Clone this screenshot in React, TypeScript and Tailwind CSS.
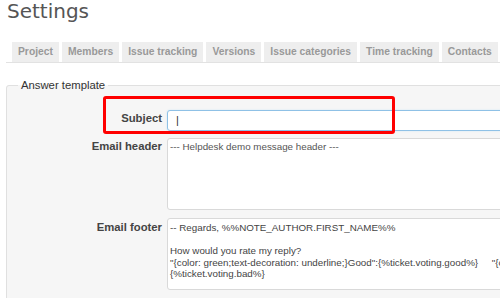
import React from 'react'

const tabs = [
  'Project',
  'Members',
  'Issue tracking',
  'Versions',
  'Issue categories',
  'Time tracking',
  'Contacts',
  'Helpdesk',
]

function Tab({ label }: { label: string }) {
  return (
    <div className="shrink-0 bg-[#eeeeee] px-[6px] text-[10.3px] font-bold leading-[20px] text-[#999999]">
      {label}
    </div>
  )
}

export default function App() {
  return (
    <div className="h-[298px] w-[500px] overflow-hidden bg-white font-['Liberation_Sans',Arial,sans-serif]">
      <h2 className="pl-[7px] font-['DejaVu_Sans',sans-serif] text-[20px] font-normal leading-[22px] text-[#555555]">
        Settings
      </h2>

      <div className="ml-[6px] mt-[20px] flex w-[600px] gap-[3px] border-b border-[#e2e2e2] pl-[6px]">
        {tabs.map((t) => (
          <Tab key={t} label={t} />
        ))}
      </div>

      <div className="relative mt-[15px]">
        <fieldset className="ml-[6px] w-[600px] rounded-[3px] border border-[#e0e0e0] bg-[#f6f6f6] pb-[10px] pt-[18px]">
          <legend className="ml-[11px] px-[3px] text-[11.3px] leading-[14px] text-[#333333]">
            Answer template
          </legend>

          <div className="flex flex-col gap-[7px]">
            <div className="flex items-start gap-[5px]">
              <label className="w-[155px] shrink-0 pt-[1px] text-right text-[11.3px] font-bold leading-[14px] text-[#444444]">
                Subject
              </label>
              <div className="h-[21px] w-[420px] rounded-[3px] border border-[#8fc1e6] bg-white pl-[8px] text-[11px] leading-[19px] text-[#333333] shadow-[0_0_2px_#cfe6f7]">
                |
              </div>
            </div>

            <div className="flex items-start gap-[5px]">
              <label className="w-[155px] shrink-0 pt-[1px] text-right text-[11.3px] font-bold leading-[14px] text-[#444444]">
                Email header
              </label>
              <div className="h-[72px] w-[420px] rounded-[3px] border border-[#d9d9d9] bg-white pl-[2px] pt-[2px] text-[9.8px] leading-[11.5px] text-[#555555]">
                --- Helpdesk demo message header ---
              </div>
            </div>

            <div className="mt-[1px] flex items-start gap-[5px]">
              <label className="w-[155px] shrink-0 pt-[2px] text-right text-[11.3px] font-bold leading-[14px] text-[#444444]">
                Email footer
              </label>
              <div className="h-[72px] w-[420px] whitespace-pre rounded-[3px] border border-[#d9d9d9] bg-white pl-[2px] pt-[3px] text-[9.8px] leading-[11.5px] text-[#444444]">
                {'-- Regards, %%NOTE_AUTHOR.FIRST_NAME%%\n\nHow would you rate my reply?\n"{color: green;text-decoration: underline;}Good":{%ticket.voting.good%}     "{color: red;}Bad":\n{%ticket.voting.bad%}'}
              </div>
            </div>
          </div>
        </fieldset>

        <div className="pointer-events-none absolute left-[103px] top-[18px] h-[38px] w-[292px] rounded-[3px] border-[3px] border-[#ff0000]" />
      </div>
    </div>
  )
}
